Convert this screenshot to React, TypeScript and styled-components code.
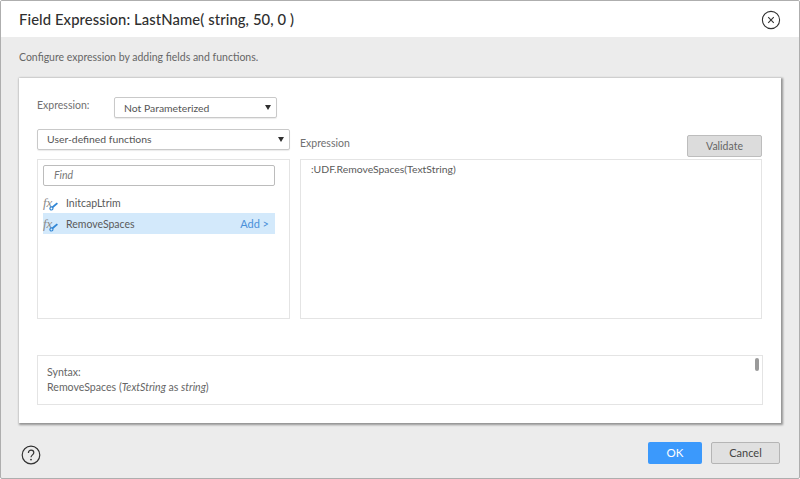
import styled, { createGlobalStyle } from "styled-components"

const GlobalStyle = createGlobalStyle`
  html, body {
    margin: 0;
    padding: 0;
    background: #ffffff;
  }
  body {
    font-family: Lato, "Open Sans", sans-serif;
    color: #4a4a4a;
  }
`

const Dialog = styled.div`
  box-sizing: border-box;
  width: 800px;
  height: 479px;
  display: flex;
  flex-direction: column;
  background: #ececec;
  border: 1px solid #aeaeae;
  border-radius: 2px;
  overflow: hidden;
`
const Header = styled.div`
  flex: 0 0 36px;
  display: flex;
  align-items: center;
  justify-content: space-between;
  padding: 0 18px 0 18px;
  background: #ffffff;
`
const Title = styled.div`
  font-size: 14.8px;
  font-weight: 500;
  color: #2f2f2f;
  letter-spacing: 0.1px;
`
const Description = styled.div`
  height: 41px;
  padding: 14px 0 0 18px;
  box-sizing: border-box;
  font-size: 10.5px;
  line-height: 13px;
  color: #666666;
`
const Panel = styled.div`
  box-sizing: border-box;
  width: 762px;
  height: 345px;
  margin-left: 18px;
  padding: 19px 18px 18px;
  display: flex;
  flex-direction: column;
  background: #ffffff;
  box-shadow: 1px 1px 2px 1px rgba(0, 0, 0, 0.38);
`
const ExpressionRow = styled.div`
  display: flex;
  align-items: flex-start;
  height: 32px;
`
const FieldLabel = styled.div`
  width: 77px;
  padding-top: 2px;
  font-size: 10.5px;
  line-height: 13px;
  color: #707070;
`
const Select = styled.div<{ $width: number }>`
  box-sizing: border-box;
  width: ${(p) => p.$width}px;
  height: 21px;
  display: flex;
  align-items: center;
  justify-content: space-between;
  padding: 0 5px 0 9px;
  font-size: 10.4px;
  color: #555555;
  background: #ffffff;
  border: 1px solid #c9c9c9;
  border-radius: 2px;
  box-shadow: 0 1px 1px rgba(0, 0, 0, 0.08);
`
const Caret = styled.span`
  width: 0;
  height: 0;
  border-left: 3.5px solid transparent;
  border-right: 3.5px solid transparent;
  border-top: 5px solid #2f2f2f;
`
const Columns = styled.div`
  display: grid;
  grid-template-columns: 253px 462px;
  column-gap: 10px;
`
const LeftColumn = styled.div`
  display: flex;
  flex-direction: column;
  gap: 9px;
`
const RightColumn = styled.div`
  display: flex;
  flex-direction: column;
`
const EditorHeading = styled.div`
  height: 30px;
  display: flex;
  align-items: flex-end;
  justify-content: space-between;
`
const EditorLabel = styled.div`
  padding-bottom: 9px;
  font-size: 10.5px;
  line-height: 13px;
  color: #707070;
`
const ValidateButton = styled.button`
  box-sizing: border-box;
  width: 75px;
  height: 22px;
  margin-bottom: 2px;
  padding: 0;
  font-family: inherit;
  font-size: 10.5px;
  color: #666666;
  background: #dcdcdc;
  border: 1px solid #bdbdbd;
  border-radius: 2px;
`
const ListBox = styled.div`
  box-sizing: border-box;
  height: 160px;
  padding: 5px 14px 0 5px;
  border: 1px solid #e4e4e4;
`
const FindInput = styled.div`
  box-sizing: border-box;
  height: 21px;
  display: flex;
  align-items: center;
  padding-left: 10px;
  font-size: 10.5px;
  font-style: italic;
  color: #777777;
  border: 1px solid #bcbcbc;
  border-radius: 2px;
`
const FunctionList = styled.div`
  margin-top: 6px;
`
const FunctionRow = styled.div<{ $selected?: boolean }>`
  box-sizing: border-box;
  height: 21px;
  display: flex;
  align-items: center;
  padding: 1px 6px 0 0;
  font-size: 10.5px;
  color: #5a5a5a;
  background: ${(p) => (p.$selected ? "#d3e9fb" : "transparent")};
`
const FxIcon = styled.span`
  position: relative;
  width: 23px;
  flex: none;
  font-family: "Liberation Serif", serif;
  font-style: italic;
  font-size: 13px;
  color: #8a8a8a;
`
const Wrench = styled.svg`
  position: absolute;
  left: 6px;
  top: 7px;
`
const FunctionName = styled.span`
  flex: 1;
`
const AddLink = styled.span`
  font-size: 11px;
  color: #4a90d9;
`
const EditorBox = styled.div`
  box-sizing: border-box;
  height: 160px;
  padding: 3px 10px;
  font-size: 10.4px;
  line-height: 13px;
  color: #5a5a5a;
  border: 1px solid #e4e4e4;
`
const SyntaxBox = styled.div`
  position: relative;
  box-sizing: border-box;
  height: 51px;
  margin-top: 36px;
  padding: 9px 9px 0;
  font-size: 10.6px;
  line-height: 15px;
  color: #666666;
  border: 1px solid #e4e4e4;
`
const ScrollThumb = styled.div`
  position: absolute;
  top: 2px;
  right: 3px;
  width: 4px;
  height: 13px;
  border-radius: 2px;
  background: #9a9a9a;
`
const Footer = styled.div`
  flex: 1;
  display: flex;
  align-items: center;
  justify-content: space-between;
  padding: 4px 19px 0 20px;
`
const FooterButtons = styled.div`
  display: flex;
  gap: 9px;
`
const OkButton = styled.button`
  box-sizing: border-box;
  width: 54px;
  height: 22px;
  padding: 0;
  font-family: inherit;
  font-size: 11.5px;
  color: #ffffff;
  background: #3b99fc;
  border: none;
  border-radius: 2px;
`
const CancelButton = styled.button`
  box-sizing: border-box;
  width: 69px;
  height: 22px;
  padding: 0;
  font-family: inherit;
  font-size: 11px;
  color: #444444;
  background: #e0e0e0;
  border: 1px solid #b5b5b5;
  border-radius: 2px;
`
const CloseSvg = styled.svg`
  display: block;
  margin-top: 2px;
`
const HelpSvg = styled.svg`
  display: block;
  margin-top: 4px;
`

const CloseIcon = () => (
  <CloseSvg width="20" height="20" viewBox="0 0 20 20" fill="none" stroke="#333333">
    <circle cx="10" cy="10" r="8.6" strokeWidth="1.1" />
    <path d="M7.2 7.2l5.6 5.6M12.8 7.2l-5.6 5.6" strokeWidth="1.1" />
  </CloseSvg>
)

const HelpIcon = () => (
  <HelpSvg width="20" height="20" viewBox="0 0 20 20" fill="none" stroke="#333333">
    <circle cx="10" cy="10" r="8.8" strokeWidth="1.2" />
    <path d="M7.4 8c0-1.7 1.2-2.8 2.7-2.8S12.8 6.300 12.800 7.700c0 2-2.800 2.300-2.800 4.500" strokeWidth="1.2" />
    <circle cx="10" cy="14.600" r="0.9" fill="#333333" stroke="none" />
  </HelpSvg>
)

const WrenchIcon = () => (
  <Wrench width="9" height="9" viewBox="0 0 10 10" fill="none" stroke="#2f86d6">
    <path d="M9.300 1.200L3.900 5.800" strokeWidth="2" />
    <circle cx="2.700" cy="7.200" r="1.700" strokeWidth="1.300" />
  </Wrench>
)

const FxMark = () => (
  <FxIcon>
    fx
    <WrenchIcon />
  </FxIcon>
)

export default function App() {
  return (
    <>
      <GlobalStyle />
      <Dialog>
        <Header>
          <Title>Field Expression: LastName( string, 50, 0 )</Title>
          <CloseIcon />
        </Header>
        <Description>Configure expression by adding fields and functions.</Description>
        <Panel>
          <ExpressionRow>
            <FieldLabel>Expression:</FieldLabel>
            <Select $width={163}>
              Not Parameterized
              <Caret />
            </Select>
          </ExpressionRow>
          <Columns>
            <LeftColumn>
              <Select $width={253}>
                User-defined functions
                <Caret />
              </Select>
              <ListBox>
                <FindInput>Find</FindInput>
                <FunctionList>
                  <FunctionRow>
                    <FxMark />
                    <FunctionName>InitcapLtrim</FunctionName>
                  </FunctionRow>
                  <FunctionRow $selected>
                    <FxMark />
                    <FunctionName>RemoveSpaces</FunctionName>
                    <AddLink>Add &gt;</AddLink>
                  </FunctionRow>
                </FunctionList>
              </ListBox>
            </LeftColumn>
            <RightColumn>
              <EditorHeading>
                <EditorLabel>Expression</EditorLabel>
                <ValidateButton>Validate</ValidateButton>
              </EditorHeading>
              <EditorBox>:UDF.RemoveSpaces(TextString)</EditorBox>
            </RightColumn>
          </Columns>
          <SyntaxBox>
            Syntax:
            <br />
            RemoveSpaces (<i>TextString</i> as <i>string</i>)
            <ScrollThumb />
          </SyntaxBox>
        </Panel>
        <Footer>
          <HelpIcon />
          <FooterButtons>
            <OkButton>OK</OkButton>
            <CancelButton>Cancel</CancelButton>
          </FooterButtons>
        </Footer>
      </Dialog>
    </>
  )
}
